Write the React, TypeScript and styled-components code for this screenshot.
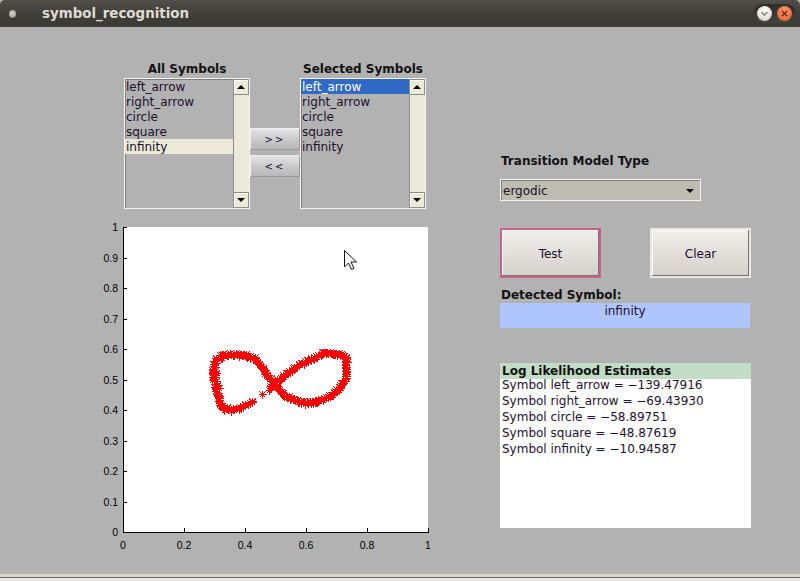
import React from 'react';
import styled, { createGlobalStyle } from 'styled-components';

const GlobalStyle = createGlobalStyle`
  html, body { margin: 0; padding: 0; background: #3c3b37; overflow: hidden; }
  #root { width: 800px; height: 581px; }
`;

const UI = `"DejaVu Sans", "Liberation Sans", sans-serif`;
const TEXT = '#1d0f2c';

const Window = styled.div`
  width: 800px;
  height: 581px;
  display: flex;
  flex-direction: column;
  font-family: ${UI};
  background: #b2b2b2;
`;

const TitleBar = styled.div`
  height: 27px;
  flex: none;
  display: flex;
  align-items: center;
  background: linear-gradient(#504f4a, #3f3e3a 55%, #3a3935);
  border-radius: 5px 5px 0 0;
  padding: 0 4px 0 9px;
`;

const TitleIcon = styled.span`
  width: 7px;
  height: 8px;
  border-radius: 50%;
  background: radial-gradient(circle at 50% 40%, #d8d8d4, #85847f);
  box-shadow: 0 1px 0 #2a2926;
`;

const TitleText = styled.span`
  margin-left: 26px;
  font-family: "DejaVu Sans", sans-serif;
  font-weight: bold;
  font-size: 13.4px;
  color: #dfdbd2;
  flex: 1;
`;

const Controls = styled.div`
  display: flex;
  align-items: center;
  gap: 5px;
  padding: 2px 4px;
  border-radius: 10px;
  background: linear-gradient(#2e2d2a, #45443f);
`;

const CtlBtn = styled.span<{ $close?: boolean }>`
  width: 15px;
  height: 15px;
  border-radius: 50%;
  display: flex;
  align-items: center;
  justify-content: center;
  background: ${p => (p.$close ? 'radial-gradient(circle at 50% 35%, #f79a6e, #e4572a)' : 'radial-gradient(circle at 50% 35%, #ffffff, #cfcdc6)')};
`;

const Body = styled.div`
  flex: 1;
  display: flex;
  background: #b2b2b2;
`;

const Footer = styled.div`
  height: 7px;
  flex: none;
  background: linear-gradient(#d8d4c8 0 3px, #6e6c67 3px 4px, #e6e6e6 4px);
`;

const LeftCol = styled.div`
  width: 500px;
  flex: none;
  display: flex;
  flex-direction: column;
  padding-top: 34px;
`;

const ListRow = styled.div`
  display: flex;
  margin-left: 124px;
`;

const ListGroup = styled.div`
  display: flex;
  flex-direction: column;
  width: 126px;
`;

const GroupLabel = styled.div`
  height: 17px;
  line-height: 17px;
  text-align: center;
  font-weight: bold;
  font-size: 12px;
  color: #111;
  white-space: nowrap;
`;

const ListBox = styled.div`
  width: 126px;
  height: 131px;
  box-sizing: border-box;
  border: 1px solid #f4f4f4;
  box-shadow: inset 1px 1px 0 #7d7d7d;
  display: flex;
  background: #b2b2b2;
`;

const Items = styled.div`
  flex: 1;
  overflow: hidden;
`;

const Item = styled.div<{ $sel?: 'focus' | 'blur' }>`
  height: 15px;
  line-height: 17px;
  font-size: 12px;
  padding-left: 1px;
  white-space: nowrap;
  color: ${p => (p.$sel === 'focus' ? '#ffffff' : TEXT)};
  background: ${p => (p.$sel === 'focus' ? '#316ac5' : p.$sel === 'blur' ? '#ece9d8' : 'transparent')};
`;

const Scroll = styled.div`
  width: 16px;
  flex: none;
  display: flex;
  flex-direction: column;
  background: #ece9d8;
  border-left: 1px solid #8c8c8c;
  box-sizing: border-box;
`;

const ScrollBtn = styled.div`
  height: 16px;
  flex: none;
  box-sizing: border-box;
  display: flex;
  align-items: center;
  justify-content: center;
  background: #ece9d8;
  border: 1px solid #8c8c8c;
  border-left: none;
  box-shadow: inset 1px 1px 0 #ffffff;
`;

const Track = styled.div`
  flex: 1;
  background: #ece9d8;
`;

const Tri = styled.span<{ $down?: boolean }>`
  width: 0;
  height: 0;
  border-left: 4px solid transparent;
  border-right: 4px solid transparent;
  ${p => (p.$down ? 'border-top: 4px solid #000;' : 'border-bottom: 4px solid #000;')}
`;

const MoveCol = styled.div`
  width: 50px;
  display: flex;
  flex-direction: column;
  gap: 5px;
  padding-top: 67px;
`;

const MoveBtn = styled.div`
  height: 22px;
  box-sizing: border-box;
  display: flex;
  align-items: center;
  justify-content: center;
  padding-top: 1px;
  font-size: 10px;
  letter-spacing: 2px;
  color: ${TEXT};
  background: linear-gradient(#e4e4e4, #c6c6c6 60%, #b8b8b8);
  border: 1px solid #9a9a9a;
  border-top-color: #eeeeee;
  border-left-color: #eeeeee;
`;

const PlotSvg = styled.svg`
  display: block;
  margin-top: 11px;
  margin-left: 100px;
`;

const RightCol = styled.div`
  width: 251px;
  flex: none;
  display: flex;
  flex-direction: column;
  padding-top: 125px;
`;

const Label = styled.div<{ $mt?: number }>`
  margin-top: ${p => p.$mt ?? 0}px;
  height: 17px;
  line-height: 19px;
  font-weight: bold;
  font-size: 12px;
  color: #111;
  padding-left: 1px;
`;

const Dropdown = styled.div`
  margin-top: 10px;
  width: 201px;
  height: 22px;
  box-sizing: border-box;
  background: #bdbdb1;
  border: 1px solid #f4f4f4;
  box-shadow: inset 1px 1px 0 #7d7d7d;
  display: flex;
  align-items: center;
  justify-content: space-between;
  padding: 1px 6px 0 2px;
  font-size: 12px;
  color: ${TEXT};
`;

const ButtonRow = styled.div`
  margin-top: 27px;
  display: flex;
  justify-content: space-between;
`;

const PushBtn = styled.div<{ $focus?: boolean }>`
  width: 101px;
  height: 50px;
  box-sizing: border-box;
  display: flex;
  align-items: center;
  justify-content: center;
  padding-top: 2px;
  font-size: 12px;
  color: ${TEXT};
  background: linear-gradient(#f0eeeb, #e0ddd8 60%, #d3d0ca);
  border: 2px solid ${p => (p.$focus ? '#c5638f' : '#e9e7e3')};
  box-shadow: inset -1px -1px 0 #76746f, inset 1px 1px 0 #fafafa;
`;

const Detected = styled.div`
  width: 250px;
  height: 25px;
  background: #aec6fd;
  text-align: center;
  font-size: 12px;
  line-height: 17px;
  color: ${TEXT};
`;

const LogBox = styled.div`
  margin-top: 35px;
  width: 251px;
  height: 165px;
  background: #ffffff;
  font-size: 12px;
  color: ${TEXT};
`;

const LogHeader = styled.div`
  height: 16px;
  line-height: 17px;
  background: #c2dcc5;
  font-weight: bold;
  color: #111;
  padding-left: 2px;
`;

const LogLines = styled.div`
  margin-top: -2px;
`;

const LogLine = styled.div`
  height: 16px;
  line-height: 16px;
  padding-left: 2px;
  white-space: nowrap;
`;

const allSymbols = ['left_arrow', 'right_arrow', 'circle', 'square', 'infinity'];

function SymbolList({ title, sel, mode }: { title: string; sel: number; mode: 'focus' | 'blur' }) {
  return (
    <ListGroup>
      <GroupLabel>{title}</GroupLabel>
      <ListBox>
        <Items>
          {allSymbols.map((s, i) => (
            <Item key={s} $sel={i === sel ? mode : undefined}>
              {s}
            </Item>
          ))}
        </Items>
        <Scroll>
          <ScrollBtn>
            <Tri />
          </ScrollBtn>
          <Track />
          <ScrollBtn>
            <Tri $down />
          </ScrollBtn>
        </Scroll>
      </ListBox>
    </ListGroup>
  );
}

// ---------- plot ----------
const OX = 100;
const OY = 220;
const keyPts: [number, number][] = [
  [253, 401], [243, 406], [233, 409], [223, 408], [218, 402], [217, 390], [214, 377], [215, 363],
  [220, 356], [230, 354], [243, 355], [253, 358], [260, 365], [268, 377], [275, 385], [283, 394],
  [290, 398], [300, 402], [313, 402], [327, 397], [340, 387], [345, 377], [346, 363], [342, 355],
  [330, 353], [323, 353], [313, 358], [300, 365], [287, 373], [276, 382], [268, 389],
];

function catmull(pts: [number, number][], step: number) {
  const out: [number, number][] = [];
  for (let i = 0; i < pts.length - 1; i++) {
    const p0 = pts[Math.max(0, i - 1)];
    const p1 = pts[i];
    const p2 = pts[i + 1];
    const p3 = pts[Math.min(pts.length - 1, i + 2)];
    const len = Math.hypot(p2[0] - p1[0], p2[1] - p1[1]);
    const n = Math.max(1, Math.round(len / step));
    for (let k = 0; k < n; k++) {
      const t = k / n;
      const t2 = t * t;
      const t3 = t2 * t;
      const f = (a: number, b: number, c: number, d: number) =>
        0.5 * (2 * b + (-a + c) * t + (2 * a - 5 * b + 4 * c - d) * t2 + (-a + 3 * b - 3 * c + d) * t3);
      out.push([f(p0[0], p1[0], p2[0], p3[0]), f(p0[1], p1[1], p2[1], p3[1])]);
    }
  }
  out.push(pts[pts.length - 1]);
  return out;
}

let seed = 7;
function rnd() {
  seed = (seed * 16807) % 2147483647;
  return (seed - 1) / 2147483646;
}

const curve = catmull(keyPts, 1.2).map(([x, y]) => {
  const heavy = x < 232 ? 2.2 : 1.3;
  return [x + (rnd() - 0.5) * 2 * heavy, y + (rnd() - 0.5) * 2 * heavy] as [number, number];
});
curve.push([262, 394]);

function Star({ x, y }: { x: number; y: number }) {
  const r = 4;
  const d = 3;
  const cx = Math.round(x - OX) + 0.5;
  const cy = Math.round(y - OY) + 0.5;
  return (
    <path
      d={`M${cx - r} ${cy}H${cx + r}M${cx} ${cy - r}V${cy + r}M${cx - d} ${cy - d}L${cx + d} ${cy + d}M${cx - d} ${cy + d}L${cx + d} ${cy - d}`}
    />
  );
}

function Plot() {
  const x0 = 23;
  const y0 = 312;
  const s = 305;
  const yt = Array.from({ length: 11 }, (_, i) => i / 10);
  const xt = Array.from({ length: 6 }, (_, i) => i / 5);
  const lab = (v: number) => (v === 0 ? '0' : v === 1 ? '1' : v.toFixed(1));
  return (
    <PlotSvg width={340} height={335} viewBox="0 0 340 335">
      <rect x={x0} y={7} width={s} height={s} fill="#ffffff" />
      <g stroke="#000" strokeWidth={1} shapeRendering="crispEdges">
        <line x1={x0 + 0.5} y1={7} x2={x0 + 0.5} y2={y0 + 1} />
        <line x1={x0} y1={y0 + 0.5} x2={x0 + s + 1} y2={y0 + 0.5} />
        {yt.map(v => {
          const y = Math.round(y0 - v * s) + 0.5;
          return <line key={'y' + v} x1={x0} y1={y} x2={x0 + 4} y2={y} />;
        })}
        {xt.map(v => {
          const x = Math.round(x0 + v * s) + 0.5;
          return <line key={'x' + v} x1={x} y1={y0} x2={x} y2={y0 - 4} />;
        })}
      </g>
      <g fontFamily='"Liberation Sans", Arial, sans-serif' fontSize={10.5} fill="#000">
        {yt.map(v => (
          <text key={'ty' + v} x={18} y={Math.round(y0 - v * s) + 4} textAnchor="end">
            {lab(v)}
          </text>
        ))}
        {xt.map(v => (
          <text key={'tx' + v} x={x0 + v * s} y={329} textAnchor="middle">
            {lab(v)}
          </text>
        ))}
      </g>
      <g stroke="#ff0000" strokeWidth={1} fill="none" shapeRendering="crispEdges">
        {curve.map(([x, y], i) => (
          <Star key={i} x={x} y={y} />
        ))}
      </g>
      <path
        d="M244.5 30.5 V47 L248.5 43 L251.5 49.5 L254 48.5 L251 42 L256.5 42 Z"
        fill="#ffffff"
        stroke="#111"
        strokeWidth={1}
        strokeLinejoin="miter"
      />
    </PlotSvg>
  );
}

export default function App() {
  return (
    <>
      <GlobalStyle />
      <Window>
        <TitleBar>
          <TitleIcon />
          <TitleText>symbol_recognition</TitleText>
          <Controls>
            <CtlBtn>
              <svg width="9" height="9" viewBox="0 0 9 9">
                <path d="M1.5 3 L4.5 6 L7.5 3" fill="none" stroke="#8a8880" strokeWidth="1.6" />
              </svg>
            </CtlBtn>
            <CtlBtn $close>
              <svg width="9" height="9" viewBox="0 0 9 9">
                <path d="M2 2 L7 7 M7 2 L2 7" fill="none" stroke="#7a2a10" strokeWidth="1.5" />
              </svg>
            </CtlBtn>
          </Controls>
        </TitleBar>
        <Body>
          <LeftCol>
            <ListRow>
              <SymbolList title="All Symbols" sel={4} mode="blur" />
              <MoveCol>
                <MoveBtn>&gt;&gt;</MoveBtn>
                <MoveBtn>&lt;&lt;</MoveBtn>
              </MoveCol>
              <SymbolList title="Selected Symbols" sel={0} mode="focus" />
            </ListRow>
            <Plot />
          </LeftCol>
          <RightCol>
            <Label>Transition Model Type</Label>
            <Dropdown>
              <span>ergodic</span>
              <Tri $down />
            </Dropdown>
            <ButtonRow>
              <PushBtn $focus>Test</PushBtn>
              <PushBtn>Clear</PushBtn>
            </ButtonRow>
            <Label $mt={8}>Detected Symbol:</Label>
            <Detected>infinity</Detected>
            <LogBox>
              <LogHeader>Log Likelihood Estimates</LogHeader>
              <LogLines>
                <LogLine>Symbol left_arrow = −139.47916</LogLine>
                <LogLine>Symbol right_arrow = −69.43930</LogLine>
                <LogLine>Symbol circle = −58.89751</LogLine>
                <LogLine>Symbol square = −48.87619</LogLine>
                <LogLine>Symbol infinity = −10.94587</LogLine>
              </LogLines>
            </LogBox>
          </RightCol>
        </Body>
        <Footer />
      </Window>
    </>
  );
}
